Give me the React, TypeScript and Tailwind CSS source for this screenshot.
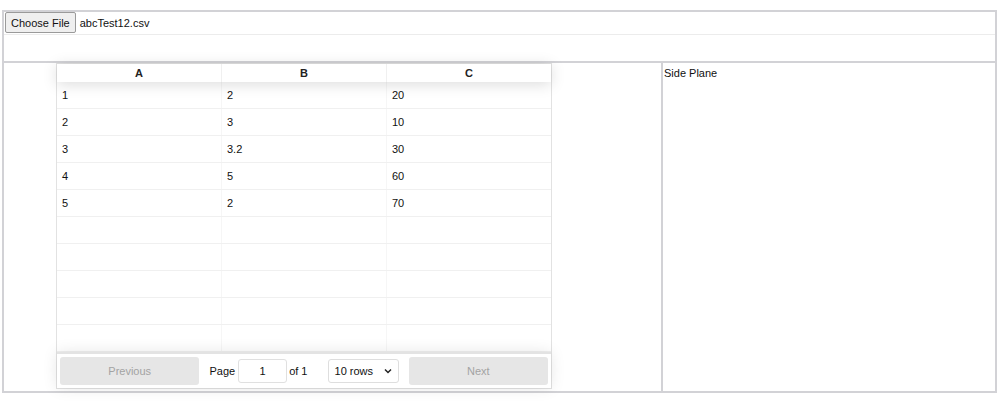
import React from 'react';

const rows = [
  ['1', '2', '20'],
  ['2', '3', '10'],
  ['3', '3.2', '30'],
  ['4', '5', '60'],
  ['5', '2', '70'],
];
const pageSize = 10;

const Table = () => {
  const padded = [...rows, ...Array(pageSize - rows.length).fill(['', '', ''])];
  return (
    <div className="w-[496px] ml-[52px] flex flex-col border border-[#e2e2e2] bg-white">
      {/* header */}
      <div className="flex h-[18px] shrink-0 shadow-[0_2px_15px_0_rgba(0,0,0,0.15)] relative z-10 bg-white">
        {['A', 'B', 'C'].map((h, i) => (
          <div
            key={h}
            className={`flex-1 flex items-center justify-center font-bold text-[#222] ${i < 2 ? 'border-r border-[#f0f0f0]' : ''}`}
          >
            {h}
          </div>
        ))}
      </div>

      {/* body */}
      <div className="flex flex-col">
        {padded.map((r: string[], ri: number) => (
          <div key={ri} className="flex h-[27px] shrink-0 border-b border-[#f0f0f0]">
            {r.map((c, ci) => (
              <div
                key={ci}
                className={`flex-1 flex items-center px-[5px] pt-[1px] text-[#111] ${ci < 2 ? 'border-r border-[#f6f6f6]' : ''}`}
              >
                {c}
              </div>
            ))}
          </div>
        ))}
      </div>

      {/* pagination */}
      <div className="flex items-stretch p-[3px] h-[36px] shrink-0 border-t-2 border-[#e3e3e3] shadow-[0_0_15px_0_rgba(0,0,0,0.1)] relative z-10 bg-white">
        <div className="flex-1 flex">
          <button className="w-full rounded-[3px] bg-[#e6e6e6] text-[#a3a3a3]">Previous</button>
        </div>
        <div className="flex-[1.5] flex items-center justify-around">
          <div className="flex items-center text-[#111]">
            <span>Page</span>
            <div className="ml-[3px] w-[49px] h-[24px] border border-[#e0e0e0] rounded-[3px] flex items-center justify-center">
              1
            </div>
            <span className="ml-[2px]">of 1</span>
          </div>
          <div className="w-[71px] h-[24px] border border-[#dedede] rounded-[3px] flex items-center justify-between pl-[6px] pr-[6px] text-[#111]">
            <span>10 rows</span>
            <svg width="8" height="6" viewBox="0 0 8 6" fill="none">
              <path d="M1 1.5 L4 4.5 L7 1.5" stroke="#222" strokeWidth="1.5" />
            </svg>
          </div>
        </div>
        <div className="flex-1 flex">
          <button className="w-full rounded-[3px] bg-[#e6e6e6] text-[#a3a3a3]">Next</button>
        </div>
      </div>
    </div>
  );
};

export default function App() {
  return (
    <div className="w-[1004px] h-[405px] bg-white pt-[10px] pl-[2px] font-['Liberation_Sans',Arial,sans-serif] text-[11px] leading-[13px]">
      <div className="w-[995px] border-2 border-[#d2d2d6] flex flex-col">
        {/* file picker row */}
        <div className="h-[23px] shrink-0 flex items-start pl-[1px] border-b border-[#ececec]">
          <div className="h-[21px] px-[5px] pt-[1px] flex items-center bg-[#efefef] border border-[#9a9a9a] rounded-[2px] text-[#111]">
            Choose File
          </div>
          <span className="ml-[4px] mt-[5px] text-[#111]">abcTest12.csv</span>
        </div>

        {/* empty row */}
        <div className="h-[28px] shrink-0 border-b-2 border-[#d2d2d6]" />

        {/* main */}
        <div className="h-[328px] shrink-0 flex">
          <div className="w-[659px] border-r-2 border-[#d2d2d6]">
            <Table />
          </div>
          <div className="flex-1 pt-[4px] pl-[1px] text-[#111]">Side Plane</div>
        </div>
      </div>
    </div>
  );
}
